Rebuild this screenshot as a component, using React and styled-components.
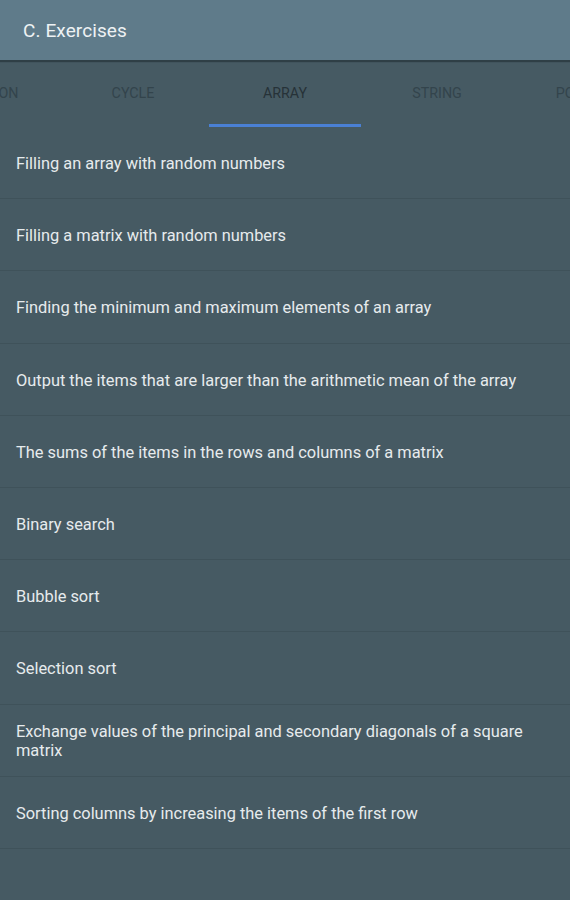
import React from "react";
import styled, { createGlobalStyle } from "styled-components";

const Global = createGlobalStyle`
  html, body { margin: 0; padding: 0; background: #465a63; }
  body { font-family: Roboto, "Noto Sans", sans-serif; }
  * { box-sizing: border-box; }
`;

const Screen = styled.div`
  width: 570px;
  height: 900px;
  overflow: hidden;
  background: #465a63;
  display: flex;
  flex-direction: column;
`;

const AppBar = styled.header`
  height: 60px;
  flex: none;
  background: #5f7b8a;
  display: flex;
  align-items: center;
  padding: 0 23px 0 23px;
  box-shadow: 0 2px 1px rgba(30, 42, 48, 0.55);
  position: relative;
  z-index: 1;
`;

const Title = styled.h1`
  margin: 0;
  font-size: 19px;
  font-weight: 400;
  color: #eef2f4;
  letter-spacing: 0.1px;
`;

const TabStrip = styled.nav`
  height: 67px;
  flex: none;
  overflow: hidden;
  display: flex;
`;

const TabTrack = styled.div`
  display: flex;
  margin-left: -95px;
`;

const Tab = styled.div`
  width: 152px;
  flex: none;
  display: flex;
  flex-direction: column;
  align-items: center;
  justify-content: flex-end;
`;

const TabLabel = styled.span`
  flex: 1;
  display: flex;
  align-items: center;
  padding-top: 2px;
  font-size: 14.3px;
  font-weight: 400;
  text-transform: uppercase;
  color: ${(p) => (p.$active ? "#263238" : "#33444c")};
`;

const Indicator = styled.div`
  width: 100%;
  height: 3px;
  background: ${(p) => (p.$active ? "#4a80d4" : "transparent")};
`;

const List = styled.ul`
  list-style: none;
  margin: 0;
  padding: 0;
`;

const Row = styled.li`
  height: 72.2px;
  display: flex;
  align-items: center;
  padding: 2px 40px 0 16px;
  border-bottom: 1px solid #3f525a;
  font-size: 16.4px;
  line-height: 19px;
  color: #e6ebed;
`;

const tabs = ["Condition", "Cycle", "Array", "String", "Pointers"];
const items = [
  "Filling an array with random numbers",
  "Filling a matrix with random numbers",
  "Finding the minimum and maximum elements of an array",
  "Output the items that are larger than the arithmetic mean of the array",
  "The sums of the items in the rows and columns of a matrix",
  "Binary search",
  "Bubble sort",
  "Selection sort",
  "Exchange values of the principal and secondary diagonals of a square matrix",
  "Sorting columns by increasing the items of the first row",
];

export default function App() {
  return (
    <Screen>
      <Global />
      <AppBar>
        <Title>C. Exercises</Title>
      </AppBar>
      <TabStrip>
        <TabTrack>
          {tabs.map((t) => (
            <Tab key={t}>
              <TabLabel $active={t === "Array"}>{t}</TabLabel>
              <Indicator $active={t === "Array"} />
            </Tab>
          ))}
        </TabTrack>
      </TabStrip>
      <List>
        {items.map((it) => (
          <Row key={it}>{it}</Row>
        ))}
      </List>
    </Screen>
  );
}
